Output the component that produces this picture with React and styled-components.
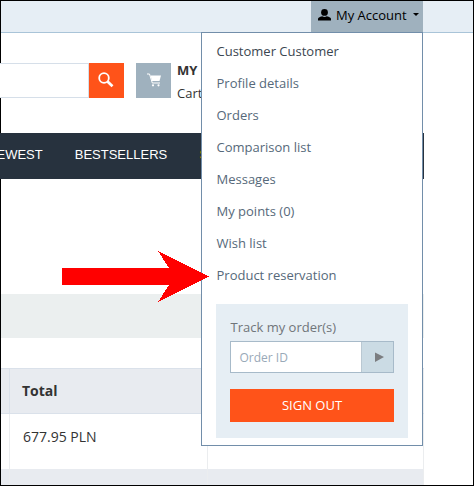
import React from 'react';
import styled, { createGlobalStyle } from 'styled-components';

const Global = createGlobalStyle`
  * { box-sizing: border-box; }
  body { margin: 0; background: #fff; font: 13px/20px "Open Sans", sans-serif; color: #333; }
`;
const Page = styled.div`
  position: relative;
  width: 474px;
  height: 486px;
  overflow: hidden;
  background: #fff;
  &::before {
    content: '';
    position: absolute;
    inset: 0;
    border: 1px solid #000;
  }
`;
const TopBar = styled.header`
  display: flex;
  justify-content: flex-end;
  height: 33px;
  padding: 0 51px 0 0;
  border-bottom: 1px solid #a9c4d8;
  background: #e6eef5;
`;
const AccountButton = styled.button`
  display: flex;
  align-items: center;
  width: 112px;
  height: 32px;
  padding: 0 4px 3px 7px;
  border: 0;
  background: #9fb1be;
  color: #000;
  font: inherit;
  white-space: nowrap;
  svg { flex: none; }
`;
const AccountLabel = styled.span`
  flex: 1;
  padding-left: 5px;
  text-align: left;
`;
const Header = styled.div`
  display: flex;
  height: 100px;
  padding-top: 30px;
`;
const SearchField = styled.div`
  position: relative;
  width: 89px;
  height: 35px;
  border: 1px solid #d6dfe9;
  border-left: 0;
  background: #fff;
`;
const IconTile = styled.div`
  width: 35px;
  height: 35px;
  margin-right: ${(p) => p.$gap}px;
  background: ${(p) => p.$color};
  svg { display: block; }
`;
const CartText = styled.div`
  line-height: 23px;
  margin-top: -4px;
  white-space: nowrap;
`;
const Nav = styled.nav`
  position: relative;
  display: flex;
  gap: 32px;
  width: 424px;
  height: 46px;
  background: #27323e;
  color: #fff;
  font: 13px/43px "Liberation Sans", sans-serif;
  a { white-space: nowrap; }
  a:first-child { margin-left: -3.5px; }
`;
const Accent = styled.a`
  color: #d58a00;
`;
const Band = styled.div`
  width: 424px;
  height: 44px;
  margin-top: 115px;
  background: #ebefef;
`;
const Table = styled.div`
  width: 424px;
  margin-top: 30px;
`;
const Row = styled.div`
  display: grid;
  grid-template-columns: 9px 198px 217px;
  height: ${(p) => p.$h}px;
  background: ${(p) => (p.$shade ? '#e8ebf0' : '#fff')};
  border: solid #dae1ea;
  border-width: ${(p) => (p.$head ? '1px 0' : '0')};
  font-size: 14px;
  font-weight: ${(p) => (p.$head ? 700 : 400)};
`;
const Cell = styled.div`
  padding: ${(p) => p.$pad || '0'};
  border-left: ${(p) => (p.$first ? '0' : `1px solid ${p.$line || '#ebedef'}`)};
  border-right: ${(p) => (p.$last ? '1px solid #ebedef' : '0')};
`;
const Menu = styled.div`
  position: absolute;
  top: 32px;
  left: 201px;
  width: 222px;
  height: 414px;
  padding: 2px 14px 0;
  border: 1px solid #728eaa;
  background: #fff;
`;
const MenuItem = styled.a`
  display: block;
  height: 32px;
  padding-left: 0.5px;
  line-height: 32px;
  color: ${(p) => (p.$strong ? '#3b4650' : '#56697a')};
`;
const TrackPanel = styled.div`
  height: 134px;
  margin-top: 13px;
  padding: 14px;
  background: #e6eef4;
`;
const TrackLabel = styled.div`
  height: 23px;
  padding-left: 0.5px;
  line-height: 19px;
  color: #70757a;
`;
const OrderField = styled.div`
  display: flex;
  height: 32px;
  border: 1px solid #a7bac9;
`;
const OrderInput = styled.div`
  flex: 1;
  padding-left: 8.5px;
  background: #fff;
  color: #99a9b8;
  font-size: 12px;
  line-height: 31px;
`;
const GoButton = styled.div`
  width: 32px;
  background: #cbdbe4;
  border-left: 1px solid #bac8d2;
  svg { display: block; }
`;
const SignOut = styled.button`
  display: block;
  width: 164px;
  height: 33px;
  margin-top: 16px;
  padding: 0;
  border: 0;
  background: #ff5319;
  color: #fff;
  font: 13px/33px "Open Sans", sans-serif;
`;
const Pointer = styled.svg`
  position: absolute;
  top: 251px;
  left: 62px;
`;

const items = ['Profile details', 'Orders', 'Comparison list', 'Messages', 'My points (0)', 'Wish list', 'Product reservation'];

export default function App() {
  return (
    <Page>
      <Global />
      <TopBar>
        <AccountButton>
          <svg width="13" height="12" viewBox="0 0 13 12"><ellipse cx="6.5" cy="3.4" rx="3.4" ry="3.4" /><path d="M0 11.5V10Q0 8.2 4.2 7.3Q6.5 8.5 8.8 7.3Q13 8.2 13 10V11.5Z" /></svg>
          <AccountLabel>My Account</AccountLabel>
          <svg width="6" height="3" viewBox="0 0 6 3"><path d="M0 0H6L3 3Z" /></svg>
        </AccountButton>
      </TopBar>
      <Header>
        <SearchField />
        <IconTile $color="#ff5319" $gap={12}>
          <svg width="35" height="35" fill="none" stroke="#fff"><circle cx="15" cy="15" r="4.8" strokeWidth="1.8" /><path d="M18.5 18.5L23.5 23.2" strokeWidth="2.8" /></svg>
        </IconTile>
        <IconTile $color="#9fb1be" $gap={6}>
          <svg width="35" height="35" fill="#fff"><path d="M14.5 12.5H25L23.5 18H16Z" /><path d="M11 11H13.5L16.3 20H24" fill="none" stroke="#fff" /><circle cx="17" cy="22.3" r="1.1" /><circle cx="22.5" cy="22.3" r="1.1" /></svg>
        </IconTile>
        <CartText><b>MY</b><br />Cart</CartText>
      </Header>
      <Nav><a>EWEST</a><a>BESTSELLERS</a><Accent>S</Accent></Nav>
      <Band />
      <Table>
        <Row $h={46} $shade $head><Cell $first /><Cell $line="#dae1ea" $pad="12px 12px">Total</Cell><Cell $line="#dae1ea" $last /></Row>
        <Row $h={55}><Cell $first /><Cell $pad="13px 13px">677.95 PLN</Cell><Cell $last /></Row>
        <Row $h={17} $shade><Cell $first /><Cell /><Cell $last /></Row>
      </Table>
      <Menu>
        <MenuItem $strong>Customer Customer</MenuItem>
        {items.map((t) => <MenuItem key={t}>{t}</MenuItem>)}
        <TrackPanel>
          <TrackLabel>Track my order(s)</TrackLabel>
          <OrderField>
            <OrderInput>Order ID</OrderInput>
            <GoButton><svg width="31" height="30"><path d="M13 10.5L22 15L13 20Z" fill="#7b7d80" /></svg></GoButton>
          </OrderField>
          <SignOut>SIGN OUT</SignOut>
        </TrackPanel>
      </Menu>
      <Pointer width="147" height="51" viewBox="0 0 147 51" shapeRendering="crispEdges"><path d="M0 17H107L96 0L147 25.5L96 51L107 34H0Z" fill="#f00" /></Pointer>
    </Page>
  );
}
